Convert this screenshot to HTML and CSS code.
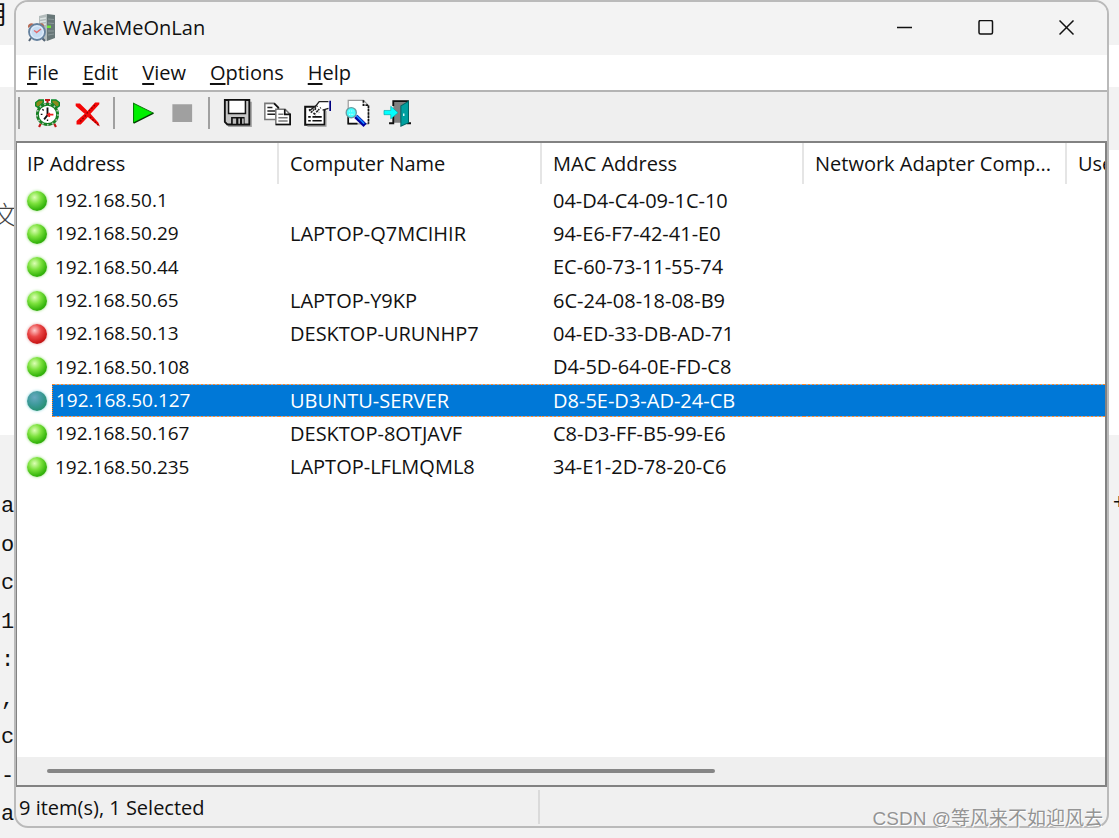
FILE: index.html
```html
<!DOCTYPE html>
<html lang="en">
<head>
<meta charset="utf-8">
<title>WakeMeOnLan</title>
<link rel="stylesheet" href="styles.css">
</head>
<body class="desktop">
<div class="backdrop" aria-hidden="true">
  <div class="band band-top"><span class="glyph-top">用</span></div>
  <div class="band band-gap"></div>
  <div class="band band-mid"></div>
  <div class="band band-page"><span class="glyph-page">文</span></div>
  <div class="band band-code">
    <div class="code-column"><span>a</span><span>o</span><span>c</span><span>1</span><span>:</span><span>,</span><span>c</span><span>-</span><span>a</span></div>
    <span class="code-end">+</span>
  </div>
</div>

<main class="window">
  <header class="titlebar">
    <svg class="app-icon" viewBox="0 0 28 28" aria-hidden="true">
      <path d="M11 2l8-2v27l-8-3z" fill="#b3bcbc"/>
      <path d="M19 0l8 1v23l-8 3z" fill="#687778"/>
      <path d="M12 5l6-1M12 8l6-1M12 11l6-1" stroke="#dce4e4" stroke-width="1.300"/>
      <path d="M20 5l6 .5M20 9l6 .5M20 17h6M20 21l6-1" stroke="#8b999a" stroke-width="1.200"/>
      <path d="M19 11.500h4v2.500h-4z" fill="#70e43b"/>
      <path d="M0 14c-1-4 3-6 6-4zM11 10c4-2 6 1 5 4z" fill="#b66c56"/>
      <path d="M3 24l-2 3M14 24l3 3" stroke="#566576" stroke-width="2"/>
      <circle cx="9" cy="18" r="8" fill="#dceafa" stroke="#65819e" stroke-width="1.800"/>
      <circle cx="9" cy="18" r="5.500" fill="#c6dcf2"/>
      <path d="M8 19l5-4M9 18.500l-3-2" stroke="#e46a6c" stroke-width="1.500"/>
    </svg>
    <h1 class="title">WakeMeOnLan</h1>
    <div class="controls">
      <button class="control" aria-label="Minimize"><svg viewBox="0 0 16 16"><path d="M0 7.500h15"/></svg></button>
      <button class="control" aria-label="Maximize"><svg viewBox="0 0 16 16"><rect x="1" y=".5" width="13.500" height="13.500" rx="1.500"/></svg></button>
      <button class="control" aria-label="Close"><svg viewBox="0 0 16 16"><path d="M.5.5l14 14M14.500.5l-14 14"/></svg></button>
    </div>
  </header>

  <nav class="menubar" aria-label="Main menu">
    <button class="menu"><u>F</u>ile</button>
    <button class="menu"><u>E</u>dit</button>
    <button class="menu"><u>V</u>iew</button>
    <button class="menu"><u>O</u>ptions</button>
    <button class="menu"><u>H</u>elp</button>
  </nav>

  <div class="toolbar" role="toolbar" aria-label="Tools">
    <span class="divider"></span>
    <button class="tool" aria-label="Wake up selected computers">
      <svg viewBox="0 0 16 17">
        <path d="M1 4V2l2-1.500h2.500V2L2.500 5zM15 4V2l-2-1.500h-2.500V2l3 3z" fill="#8a8a1c" stroke="#0b8a2a" stroke-width=".8"/>
        <path d="M6.500.5h3M8 .5v2" stroke="#c01818" stroke-width="1.200"/>
        <path d="M4 14.500l-1 2M12 14.500l1 2" stroke="#c01818" stroke-width="1.300"/>
        <circle cx="8" cy="9" r="6" fill="#fff" stroke="#178023" stroke-width="1.700"/>
        <circle cx="8" cy="9" r="6.200" fill="none" stroke="#b4c4b4" stroke-width="1" stroke-dasharray="1 2"/>
        <path d="M8 5v4.500M8 9.500l-2 2.500" stroke="#111" stroke-width="1.100"/>
        <path d="M7.500 9.200h4M9 10.500V8" stroke="#f02020" stroke-width="1.100"/>
        <path d="M4 9h1M8 13v-1M5 6l.7.7" stroke="#111" stroke-width=".8"/>
      </svg>
    </button>
    <button class="tool" aria-label="Delete selected items">
      <svg viewBox="0 0 16 17">
        <path d="M1 2.500h2.500L8 7l4.500-5h2.500v1L9.800 8.700l4.700 5.300.8 2.200-1.800-1.200L8.200 10.500 4 15H1.500v-2L6.300 8.700 1 4z" fill="#f40606"/>
        <path d="M7.500 8.500L13 2.800M7 9.500L3 14M9.500 10.500l5.500 5.500" stroke="#8c0000" stroke-width=".8" stroke-dasharray="1 1"/>
      </svg>
    </button>
    <span class="divider"></span>
    <button class="tool" aria-label="Start scanning">
      <svg viewBox="0 0 16 17"><path d="M2.700 2.500v11.700L14.500 8.300z" fill="#00f000"/><path d="M2.700 14.200L14.500 8.300" stroke="#053b05" stroke-width=".9"/><path d="M2.700 14.200V2.500L14.500 8.300" stroke="#007a00" stroke-width=".6"/></svg>
    </button>
    <button class="tool" aria-label="Stop scanning">
      <svg viewBox="0 0 16 17"><path d="M2 3h11.700v10.600H2z" fill="#a0a0a0"/></svg>
    </button>
    <span class="divider"></span>
    <button class="tool" aria-label="Save selected items">
      <svg viewBox="0 0 16 17">
        <path d="M1.500 1.500h15v15h-14z" fill="#a4a4a4"/>
        <path d="M.5.5h14.500v14.500H2L.5 13.500z" fill="#c6c6c6" stroke="#111" stroke-width="1.100"/>
        <path d="M2.700.5h10V8.500h-10z" fill="#fff" stroke="#111" stroke-width=".9"/>
        <path d="M4.200 10.500h8V15h-8z" fill="#111"/><path d="M5.200 11.500h2v3h-2zM8.500 11.500h1v3h-1zM10.700 11.500h1v3h-1z" fill="#bdbdbd"/>
      </svg>
    </button>
    <button class="tool" aria-label="Copy selected items">
      <svg viewBox="0 0 16 17">
        <path d="M.5 2.500h5.500l2.500 2.500v7h-8z" fill="#fff" stroke="#777" stroke-width=".9"/><path d="M6 2.500L8.500 5v2" fill="none" stroke="#111"/>
        <path d="M2 5h3M2 7h5M2 9h5" stroke="#222" stroke-width=".9"/>
        <path d="M7 6h5.500L15.500 9v6H7z" fill="#fff" stroke="#777" stroke-width=".9"/><path d="M12.300 6v3h3.200v6H7" fill="none" stroke="#111" stroke-width="1"/>
        <path d="M8.500 9h3M8.500 11h5.500M8.500 13h5.500" stroke="#777" stroke-width=".9"/>
      </svg>
    </button>
    <button class="tool" aria-label="Properties">
      <svg viewBox="0 0 16 17">
        <path d="M.7 4.500h11.500v10.700H.7z" fill="#fff" stroke="#111" stroke-width="1.200"/><path d="M13 7v9H2" fill="none" stroke="#999" stroke-width=".7"/>
        <path d="M2.500 10.500h1.500M5 10.500h5.500M2.500 12.800h1.500M5 12.800h5.500" stroke="#111"/>
        <path d="M3 7l2-2 2-.5L9.500 1.500h5v4L12 6 9 7.500 7 9z" fill="#fff"/>
        <path d="M3 7l4-3L9 1.500h5.500M14.500 5.500L11 6.500" fill="none" stroke="#222" stroke-width=".8"/>
        <path d="M3 6l4 3.500M5 4.500l4 3.500M4 8l4-4M6 9l4-4" stroke="#222" stroke-width=".9" stroke-dasharray="1 .7"/>
        <path d="M15.500 1v6" stroke="#000080" stroke-width="1"/>
      </svg>
    </button>
    <button class="tool" aria-label="Find">
      <svg viewBox="0 0 16 17">
        <path d="M2.500.7h9l3 3v11h-12z" fill="#fff" stroke="#999" stroke-width=".7"/><path d="M11.500.7v2.800h3v11" fill="none" stroke="#111" stroke-width="1" stroke-dasharray="1.500 .5"/><path d="M2.500 10v4.500H8" fill="none" stroke="#111"/>
        <circle cx="4.300" cy="8" r="3" fill="#4ff" stroke="#6a9da2" stroke-width=".8"/><path d="M2.800 7h3M3 9h3" stroke="#cff" stroke-width=".7" stroke-dasharray=".7 .7"/>
        <path d="M7 10.200l5.500 5.300" stroke="#0000a0" stroke-width="2.700"/><path d="M7.300 9.800l4.700 4.700" stroke="#1684ff" stroke-width="1"/>
      </svg>
    </button>
    <button class="tool" aria-label="Exit">
      <svg viewBox="0 0 16 17">
        <path d="M5.500 1h8.500v13H5.500z" fill="#808080"/><path d="M5.500 4V1.200h8.700V4M5.500 10v4.300H3M13.500 14.300H16" fill="none" stroke="#111" stroke-width="1.100"/>
        <path d="M10 4l4.500-2.700v12.700L10 16z" fill="#00a0a0" stroke="#006464" stroke-width=".6"/><path d="M11.700 8.500v1.500" stroke="#e6ffff" stroke-width=".8"/>
        <path d="M0 6.700h4V4.200L8.300 8 4 11.700V9.200H0z" fill="#0ff" stroke="#00a8a8" stroke-width=".4"/>
      </svg>
    </button>
  </div>

  <section class="listview">
    <table class="hosts">
      <colgroup><col class="col-ip"><col class="col-name"><col class="col-mac"><col class="col-company"><col class="col-user"></colgroup>
      <thead><tr><th>IP Address</th><th>Computer Name</th><th>MAC Address</th><th>Network Adapter Comp...</th><th>User Text</th></tr></thead>
      <tbody>
        <tr><td><div class="host"><i class="status on"></i><span>192.168.50.1</span></div></td><td></td><td>04-D4-C4-09-1C-10</td><td></td><td></td></tr>
        <tr><td><div class="host"><i class="status on"></i><span>192.168.50.29</span></div></td><td>LAPTOP-Q7MCIHIR</td><td>94-E6-F7-42-41-E0</td><td></td><td></td></tr>
        <tr><td><div class="host"><i class="status on"></i><span>192.168.50.44</span></div></td><td></td><td>EC-60-73-11-55-74</td><td></td><td></td></tr>
        <tr><td><div class="host"><i class="status on"></i><span>192.168.50.65</span></div></td><td>LAPTOP-Y9KP</td><td>6C-24-08-18-08-B9</td><td></td><td></td></tr>
        <tr><td><div class="host"><i class="status off"></i><span>192.168.50.13</span></div></td><td>DESKTOP-URUNHP7</td><td>04-ED-33-DB-AD-71</td><td></td><td></td></tr>
        <tr><td><div class="host"><i class="status on"></i><span>192.168.50.108</span></div></td><td></td><td>D4-5D-64-0E-FD-C8</td><td></td><td></td></tr>
        <tr class="selected"><td><div class="host"><i class="status picked"></i><span>192.168.50.127</span></div></td><td>UBUNTU-SERVER</td><td>D8-5E-D3-AD-24-CB</td><td></td><td></td></tr>
        <tr><td><div class="host"><i class="status on"></i><span>192.168.50.167</span></div></td><td>DESKTOP-8OTJAVF</td><td>C8-D3-FF-B5-99-E6</td><td></td><td></td></tr>
        <tr><td><div class="host"><i class="status on"></i><span>192.168.50.235</span></div></td><td>LAPTOP-LFLMQML8</td><td>34-E1-2D-78-20-C6</td><td></td><td></td></tr>
      </tbody>
    </table>
    <div class="scrollbar"><div class="thumb"></div></div>
  </section>

  <footer class="statusbar">
    <span class="panel">9 item(s), 1 Selected</span>
  </footer>
</main>
<div class="watermark">CSDN @等风来不如迎风去</div>
</body>
</html>
```

FILE: styles.css
```css
* { box-sizing: border-box; }

.desktop {
  position: relative;
  height: 100vh;
  margin: 0;
  padding: 0 10px 10px 14px;
  overflow: hidden;
  background: #f2f2f2;
  color: #111;
  font-family: "Open Sans", "Noto Sans", "Noto Sans CJK SC", sans-serif;
  font-size: 20px;
}

button {
  margin: 0;
  padding: 0;
  border: 0;
  background: none;
  color: inherit;
  font: inherit;
}

/* Document behind the window */
.backdrop {
  position: absolute;
  inset: 0;
  display: flex;
  flex-direction: column;
  overflow: hidden;
}
.band { display: flex; flex: none; overflow: hidden; }
.band-top { height: 45px; }
.band-gap { height: 42px; background: #fff; }
.band-mid { height: 63px; }
.band-page { height: 285px; background: #fff; }
.band-code { flex: 1; justify-content: space-between; padding-top: 53px; }
.glyph-top { margin-left: -19px; font: 26px/26px "Noto Sans CJK SC", sans-serif; }
.glyph-page { margin: 48px 0 0 -8px; color: #444; font: 300 26px/32px "Noto Sans CJK SC", sans-serif; }
.code-column {
  display: grid;
  grid-template-rows: repeat(9, 1fr);
  height: 347px;
  padding-left: 1px;
  font: 22px/38px "Liberation Mono", monospace;
}
.code-end { margin-right: -7px; font: 22px/32px "Liberation Mono", monospace; }

/* Window frame */
.window {
  position: relative;
  display: flex;
  flex-direction: column;
  height: 100%;
  overflow: hidden;
  border: 2px solid #bababa;
  border-top-width: 2px;
  border-radius: 14px;
  background: #f0f0f0;
}
.titlebar {
  display: flex;
  flex: none;
  align-items: center;
  height: 53px;
  padding: 0 0 2px 12px;
  background: #f3f3f3;
}
.app-icon { width: 28px; height: 28px; }
.title { margin: 0 0 0 7px; font-size: 20px; font-weight: 400; line-height: 26px; }
.controls { display: flex; align-self: stretch; margin-left: auto; }
.control { display: flex; align-items: center; justify-content: center; width: 81px; }
.control svg { width: 16px; height: 16px; fill: none; stroke: #111; stroke-width: 1.500; }

.menubar {
  display: flex;
  flex: none;
  height: 37px;
  padding-left: 11px;
  border-bottom: 2px solid #b4b4b4;
  background: #fff;
}
.menu { padding-right: 24px; line-height: 33px; }
.menu u { text-underline-offset: 3px; text-decoration-thickness: 2px; }

.toolbar {
  display: flex;
  flex: none;
  align-items: center;
  height: 49px;
  padding: 0 2px 7px;
  background: #efefef;
}
.divider { width: 2px; height: 32px; margin: 0 7px 0 6px; background: #a0a0a0; }
.divider:first-child { margin-left: 0; }
.tool { display: flex; align-items: center; justify-content: center; width: 40px; height: 40px; }
.tool svg { width: 27px; height: 29px; fill: none; overflow: visible; }

/* Host list */
.listview {
  display: flex;
  flex: 1;
  flex-direction: column;
  min-height: 0;
  overflow: hidden;
  border: 2px solid #828282;
  border-left-width: 1px;
  background: #fff;
}
.hosts {
  flex: none;
  width: 1200px;
  height: 341px;
  table-layout: fixed;
  border-collapse: separate;
  border-spacing: 0;
}
.col-ip { width: 262px; }
.col-name { width: 263px; }
.col-mac { width: 262px; }
.col-company { width: 263px; }
.hosts th {
  height: 41px;
  padding: 0 0 0 11px;
  border-right: 2px solid #e5e5e5;
  font-weight: 400;
  line-height: 24px;
  text-align: left;
  white-space: nowrap;
}
.hosts td { padding: 0 0 0 11px; line-height: 24px; white-space: nowrap; }
.hosts th:first-child,
.hosts td:first-child { padding-left: 10px; }
.host { display: flex; align-items: center; height: 33px; }
.host span { flex: 1; padding-left: 3px; font-size: 19px; line-height: 33px; }
.status {
  width: 20px;
  height: 20px;
  margin-right: 5px;
  border-radius: 50%;
}
.on { background: radial-gradient(circle at 38% 32%, #dcffb4 0, #7be13c 35%, #35b50c 68%, #268b0a 100%); box-shadow: 0 0 3px #8ddc6c; }
.off { background: radial-gradient(circle at 38% 32%, #ffc9c9 0, #ea4848 35%, #cc1818 68%, #931212 100%); box-shadow: 0 0 3px #d99; }
.picked { background: radial-gradient(circle at 38% 32%, #68a9c0 0, #3e9a9b 40%, #259070 75%, #1d7d78 100%); box-shadow: 0 0 3px #79cfd8; }
.selected { color: #fff; }
.selected td:not(:first-child),
.selected .host span {
  background:
    repeating-linear-gradient(90deg, #ff8728 0 2px, #7fbbea 2px 4px) top / 100% 1px no-repeat,
    repeating-linear-gradient(90deg, #ff8728 0 2px, #7fbbea 2px 4px) bottom / 100% 1px no-repeat,
    #0078d7;
}
.selected .host span { border-left: 1px dotted #ff8728; }

.scrollbar { flex: none; height: 28px; margin-top: auto; padding: 12px 31px 0 30px; background: #efefef; }
.thumb { width: 65%; height: 4px; border-radius: 2px; background: #868686; }

.statusbar { display: flex; flex: none; height: 39px; padding-top: 3px; }
.panel {
  flex: 0 0 48%;
  height: 34px;
  padding-left: 3px;
  border-right: 2px solid #dadada;
  line-height: 36px;
}

.watermark {
  position: absolute;
  right: 16px;
  bottom: 5px;
  color: #949494;
  font: 19px/28px "Liberation Sans", "Noto Sans CJK SC", sans-serif;
  text-shadow: 1px 1px 0 #fff;
}
```
